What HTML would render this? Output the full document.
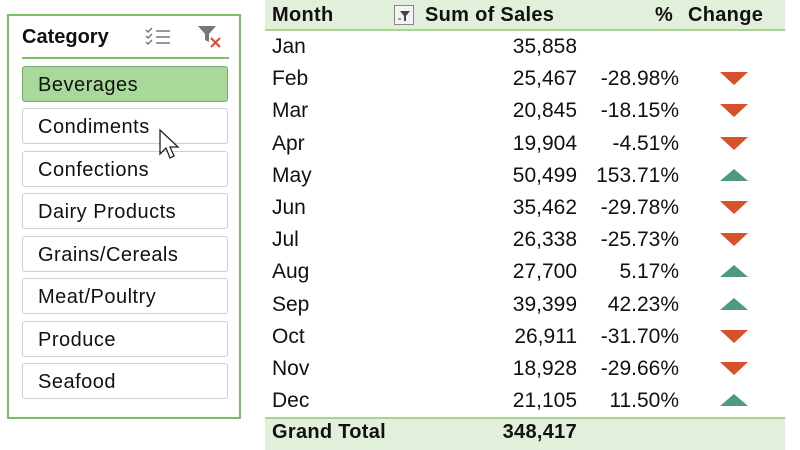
<!DOCTYPE html>
<html><head><style>
body{margin:0;width:800px;height:450px;background:#fff;font-family:"Liberation Sans",sans-serif;position:relative;overflow:hidden;color:#111}
.sl{position:absolute;left:7px;top:14px;width:234px;height:405px;border:2px solid #7cbf62;box-sizing:border-box}
.tt{position:absolute;left:22px;top:26px;font-weight:bold;font-size:20px}
.ln{position:absolute;left:22px;top:57px;width:207px;height:2px;background:#7cbf62}
.it{position:absolute;left:22px;width:206px;height:36px;border:1px solid #cfcfcf;border-radius:3px;box-sizing:border-box;font-size:20px;letter-spacing:0.5px;line-height:36px;padding-left:15px}
.it.sel{background:#a9d99a;border-color:#7aa870}
.hd{position:absolute;left:265px;top:0;width:520px;height:31px;background:#e2efda;border-bottom:2px solid #a9d48f;box-sizing:border-box}
.gt{position:absolute;left:265px;top:417px;width:520px;height:33px;background:#e2efda;border-top:2px solid #a9d48f;box-sizing:border-box}
.t{position:absolute;font-size:21px;white-space:nowrap}
.b{font-weight:bold;font-size:20px;letter-spacing:0.3px}
.r{text-align:right}
.dn{position:absolute;width:0;height:0;border-left:14px solid transparent;border-right:14px solid transparent;border-top:13px solid #d9502c}
.up{position:absolute;width:0;height:0;border-left:14px solid transparent;border-right:14px solid transparent;border-bottom:12px solid #4e9a7e}
</style></head><body>
<div class="sl"></div>
<div class="tt">Category</div>
<svg style="position:absolute;left:144px;top:26px" width="30" height="22"><g stroke="#777" stroke-width="1.5" fill="none"><path d="M2 4l2 2 4-4M2 10l2 2 4-4M2 16l2 2 4-4"/><path d="M12 5h14M12 11h14M12 17h14"/></g></svg>
<svg style="position:absolute;left:196px;top:24px" width="30" height="26"><path d="M2 2h18l-7 8v8l-4-2v-6z" fill="#777"/><path d="M15 14l9 9M24 14l-9 9" stroke="#e04a2a" stroke-width="2"/></svg>
<div class="ln"></div>
<div class="it sel" style="top:66px">Beverages</div>
<div class="it" style="top:108px">Condiments</div>
<div class="it" style="top:151px">Confections</div>
<div class="it" style="top:193px">Dairy Products</div>
<div class="it" style="top:236px">Grains/Cereals</div>
<div class="it" style="top:278px">Meat/Poultry</div>
<div class="it" style="top:321px">Produce</div>
<div class="it" style="top:363px">Seafood</div>
<svg style="position:absolute;left:158px;top:128px" width="22" height="34"><path d="M2 2v24l6-6 4 10 4-2-4-9h8z" fill="#fff" stroke="#222" stroke-width="1.3"/></svg>
<div class="hd"></div>
<div class="t b" style="left:272px;top:4px">Month</div>
<div style="position:absolute;left:394px;top:5px;width:20px;height:20px;border:1px solid #888;background:#f4f4f4;box-sizing:border-box"><svg width="18" height="18"><path d="M5 5h10l-4 5v5h-2v-5z" fill="#444"/><path d="M3 13h3" stroke="#444"/></svg></div>
<div class="t b" style="left:425px;top:4px">Sum of Sales</div>
<div class="t b" style="left:655px;top:4px">%</div>
<div class="t b" style="left:688px;top:4px">Change</div>
<div id="rows"></div>
<div class="gt"></div>
<div class="t b" style="left:272px;top:421px">Grand Total</div>
<div class="t b r" style="left:440px;width:137px;top:421px">348,417</div>
<script>
var d=[["Jan","35,858","",0],["Feb","25,467","-28.98%",-1],["Mar","20,845","-18.15%",-1],["Apr","19,904","-4.51%",-1],["May","50,499","153.71%",1],["Jun","35,462","-29.78%",-1],["Jul","26,338","-25.73%",-1],["Aug","27,700","5.17%",1],["Sep","39,399","42.23%",1],["Oct","26,911","-31.70%",-1],["Nov","18,928","-29.66%",-1],["Dec","21,105","11.50%",1]];
var h="";d.forEach(function(r,i){var y=35+i*32.2;h+='<div class="t" style="left:272px;top:'+y+'px">'+r[0]+'</div><div class="t r" style="left:430px;width:147px;top:'+y+'px">'+r[1]+'</div><div class="t r" style="left:550px;width:129px;top:'+y+'px">'+r[2]+'</div>';
if(r[3]<0)h+='<div class="dn" style="left:720px;top:'+(y+5)+'px"></div>';if(r[3]>0)h+='<div class="up" style="left:720px;top:'+(y+5)+'px"></div>';});
document.getElementById("rows").innerHTML=h;
</script>
</body></html>
